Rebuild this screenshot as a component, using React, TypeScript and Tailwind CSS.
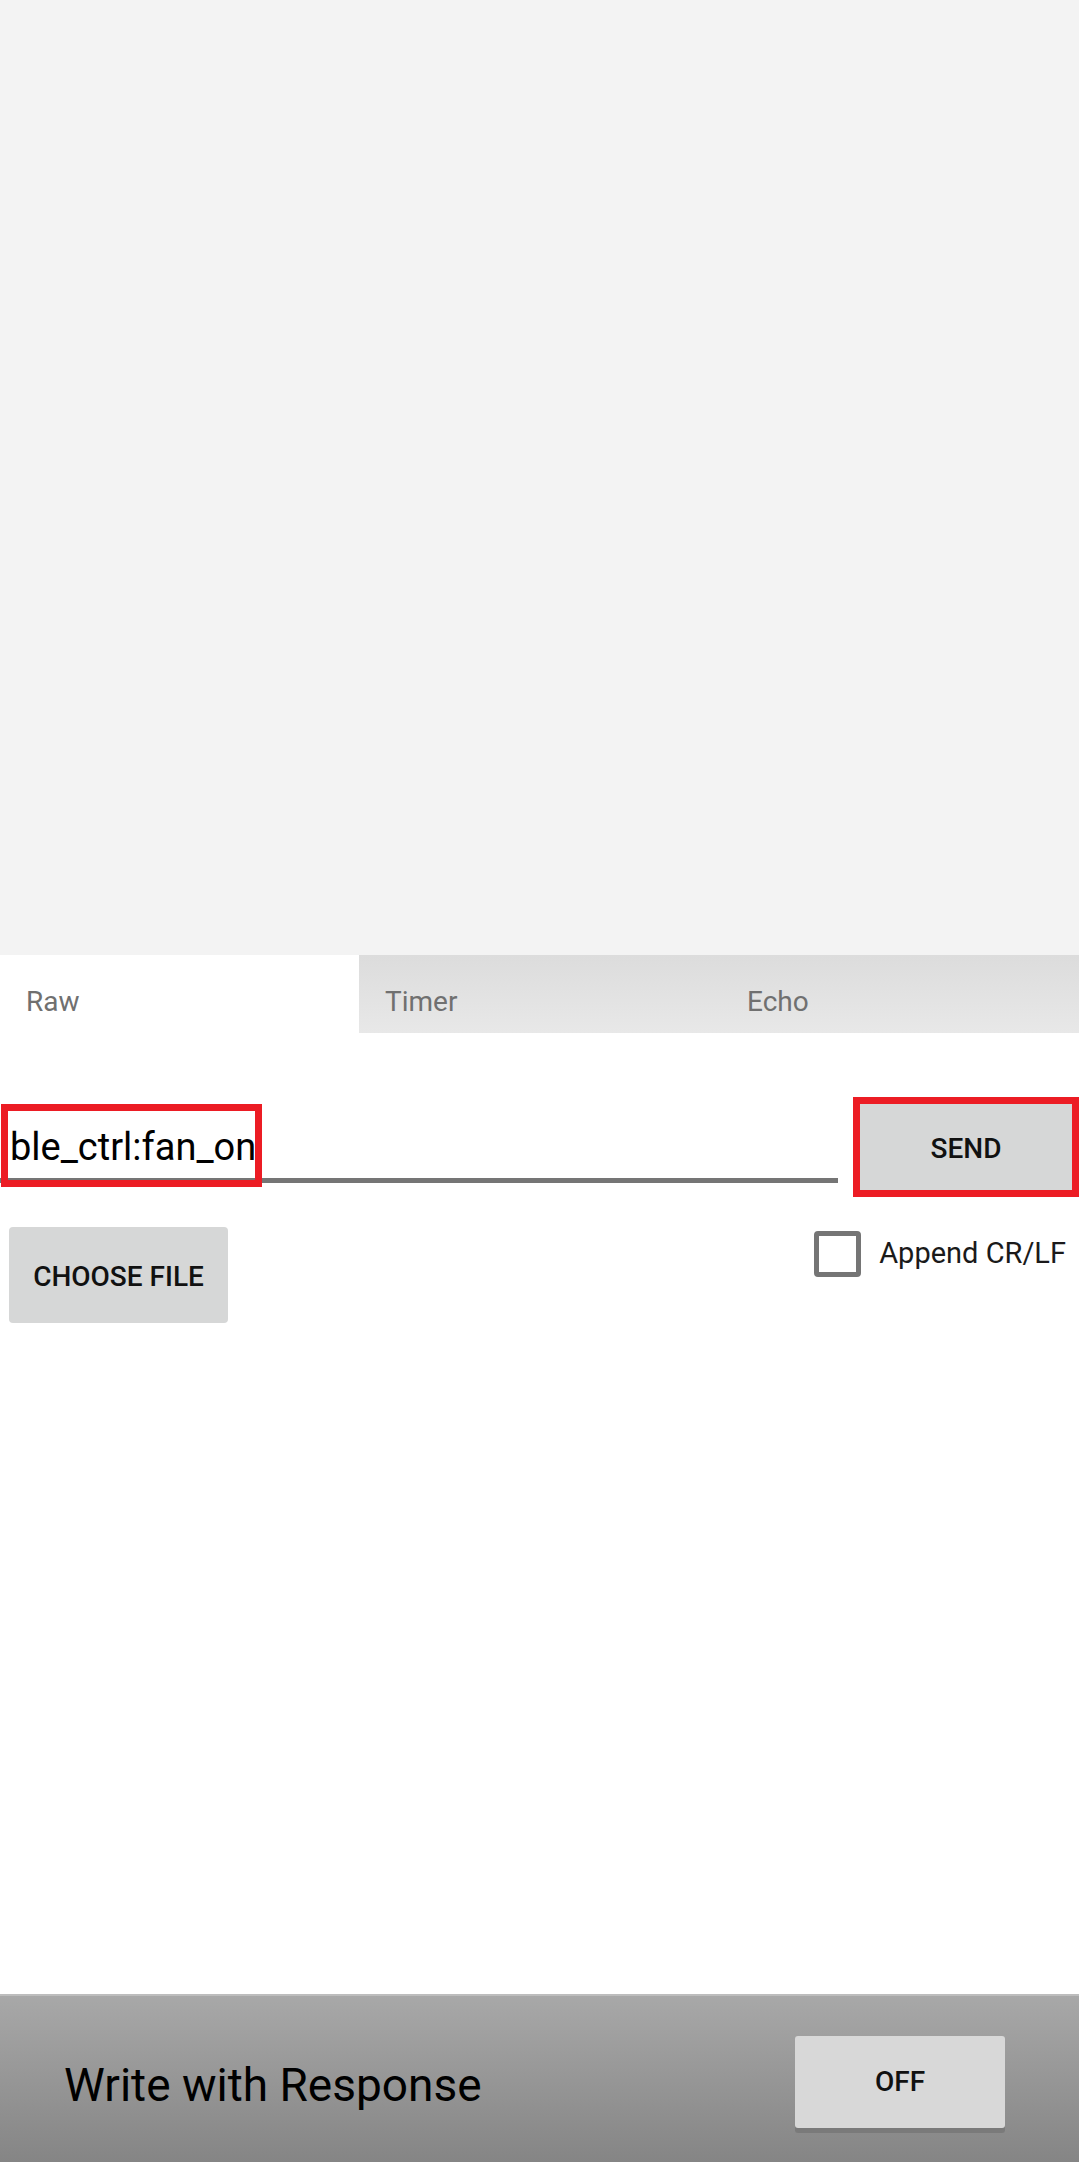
import React from "react";

export default function App() {
  const font = { fontFamily: "Roboto, 'Noto Sans', sans-serif" } as React.CSSProperties;
  return (
    <div className="w-[1079px] h-[2162px] flex flex-col bg-white overflow-hidden" style={font}>
      <div className="h-[955px] bg-[#f3f3f3] shrink-0" />
      {/* tabs */}
      <div className="h-[78px] flex shrink-0">
        <div className="w-[359px] bg-white flex items-center pl-[26px] pt-[16px] text-[28px] text-[#707070]">Raw</div>
        <div className="flex-1 flex bg-gradient-to-b from-[#dcdcdc] to-[#e8e8e8]">
          <div className="w-[360px] flex items-center pl-[26px] pt-[16px] text-[28px] text-[#707070]">Timer</div>
          <div className="flex-1 flex items-center pl-[28px] pt-[16px] text-[28px] text-[#707070]">Echo</div>
        </div>
      </div>
      {/* input row */}
      <div className="flex items-start mt-[64px] h-[100px] shrink-0">
        <div className="relative w-[838px] h-[86px] flex items-end border-b-[5px] border-[#757575]">
          <div className="pl-[10px] pb-[12px] text-[38px] leading-none text-black">ble_ctrl:fan_on</div>
          <div className="absolute left-[1px] top-[7px] w-[261px] h-[83px] border-[7px] border-[#ec1c24]" />
        </div>
        <div className="ml-[15px] w-[226px] h-[100px] border-[7px] border-[#ec1c24] bg-[#d6d7d7] flex items-center justify-center pt-[4px] text-[28px] font-medium text-[#111]">
          SEND
        </div>
      </div>
      {/* second row */}
      <div className="flex items-start mt-[30px] shrink-0">
        <div className="ml-[9px] w-[219px] h-[96px] rounded-[4px] bg-[#d6d7d7] flex items-center justify-center pt-[3px] text-[28px] font-medium text-[#111]">
          CHOOSE FILE
        </div>
        <div className="ml-auto mr-[13px] mt-[4px] flex items-center">
          <div className="w-[47px] h-[46px] border-[5px] border-[#757575] rounded-[4px]" />
          <div className="ml-[18px] text-[29px] text-[#1a1a1a]">Append CR/LF</div>
        </div>
      </div>
      {/* bottom bar */}
      <div className="mt-auto h-[168px] shrink-0 border-t-[2px] border-[#bdbdbd] bg-gradient-to-b from-[#a8a8a8] to-[#858585] flex items-center">
        <div className="ml-[64px] mt-[12px] text-[46px] text-black">Write with Response</div>
        <div className="ml-auto mr-[74px] mt-[6px] w-[210px] h-[92px] rounded-[3px] bg-[#d8d8d8] shadow-[0_5px_0_#7a7a7a] flex items-center justify-center text-[28px] font-medium text-[#111]">
          OFF
        </div>
      </div>
    </div>
  );
}
